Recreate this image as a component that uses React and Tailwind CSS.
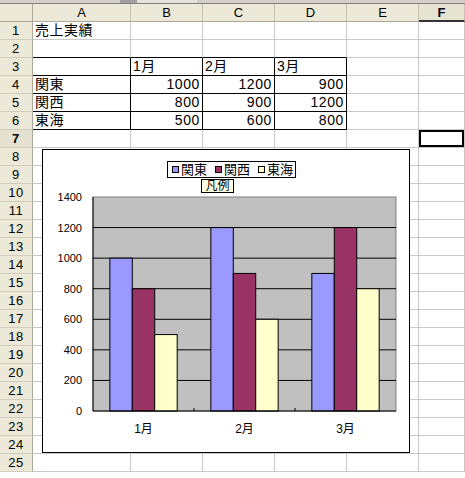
import React from 'react';

const FONT = { fontFamily: '"Liberation Sans", "Noto Sans CJK JP", sans-serif' };

const COLS = ['A', 'B', 'C', 'D', 'E', 'F'];

const DATA = {
  1: ['売上実績'],
  3: ['', '1月', '2月', '3月'],
  4: ['関東', 1000, 1200, 900],
  5: ['関西', 800, 900, 1200],
  6: ['東海', 500, 600, 800],
};

const SERIES = [
  { name: '関東', color: '#9999ff', values: [1000, 1200, 900] },
  { name: '関西', color: '#993366', values: [800, 900, 1200] },
  { name: '東海', color: '#ffffcc', values: [500, 600, 800] },
];

const Cell = ({ row, col }) => {
  const v = (DATA[row] || [])[col];
  const inTable = row >= 3 && row <= 6 && col <= 3;
  const aboveTable = row === 2 && col <= 3;
  const active = row === 7 && col === 5;
  const isNum = typeof v === 'number';

  let border = 'border-r border-b border-[#c8c8c8]';
  if (inTable) border = 'border-r border-b border-black';
  else if (aboveTable) border = 'border-r border-b border-r-[#c8c8c8] border-b-black';

  return (
    <div
      className={`h-[18px] bg-white text-[14px] leading-[17px] whitespace-nowrap overflow-visible ${border} ${
        isNum ? 'text-right pr-[2px] tracking-[0.6px]' : 'pl-[2px] tracking-[0.5px]'
      } ${active ? 'shadow-[inset_0_0_0_2px_#000]' : ''}`}
    >
      {v}
    </div>
  );
};

const Chart = () => {
  const left = 50;
  const right = 353;
  const top = 18;
  const bottom = 232;
  const catW = (right - left) / 3;
  const barW = catW / 4.5;
  const scale = (bottom - top) / 1400;
  const ticks = [0, 200, 400, 600, 800, 1000, 1200, 1400];

  return (
    <div className="absolute left-[42px] top-[149px] w-[368px] h-[304px] border border-black bg-white">
      <div className="h-[29px] pt-[11px] pl-[124px] flex items-start">
        <div className="h-[17px] border border-black bg-white flex items-center pl-[4px] pr-[2px] gap-[8px] whitespace-nowrap">
          {SERIES.map((s) => (
            <div key={s.name} className="flex items-center gap-[2px] shrink-0">
              <span className="w-[7px] h-[7px] shrink-0 border border-black" style={{ background: s.color }} />
              <span className="text-[13px] leading-[15px]">{s.name}</span>
            </div>
          ))}
        </div>
      </div>
      <div className="absolute left-[158px] top-[29px] w-[33px] h-[14px] border border-black bg-[#ffffe1] text-[12px] leading-[12px] flex items-center justify-center whitespace-nowrap">
        凡例
      </div>
      <svg width="366" height="273" className="block">
        <rect x={left} y={top} width={right - left} height={bottom - top} fill="#c0c0c0" stroke="#808080" />
        {ticks.slice(1, -1).map((t) => (
          <line key={t} x1={left} x2={right} y1={bottom - t * scale} y2={bottom - t * scale} stroke="#000" />
        ))}
        {SERIES.map((s, si) =>
          s.values.map((v, ci) => {
            const x = left + ci * catW + barW * 0.75 + si * barW;
            const h = v * scale;
            return (
              <rect key={`${si}-${ci}`} x={x} y={bottom - h} width={barW} height={h} fill={s.color} stroke="#000" />
            );
          })
        )}
        <line x1={left} x2={left} y1={top} y2={bottom} stroke="#000" />
        <line x1={left} x2={right} y1={bottom} y2={bottom} stroke="#000" />
        {[1, 2].map((i) => (
          <line key={i} x1={left + i * catW} x2={left + i * catW} y1={bottom - 3} y2={bottom} stroke="#000" />
        ))}
        {ticks.map((t) => (
          <text key={t} x={39} y={bottom - t * scale} textAnchor="end" dominantBaseline="central" fontSize="11" style={FONT}>
            {t}
          </text>
        ))}
        {['1月', '2月', '3月'].map((m, i) => (
          <text key={m} x={left + i * catW + catW / 2} y={250} textAnchor="middle" dominantBaseline="central" fontSize="12" style={FONT}>
            {m}
          </text>
        ))}
      </svg>
    </div>
  );
};

export default function App() {
  const rows = Array.from({ length: 25 }, (_, i) => i + 1);
  return (
    <div className="relative w-[465px] h-[478px] bg-white overflow-hidden text-black" style={FONT}>
      <div className="h-[4px] bg-[#d4d0c8] border-b border-[#808080] flex">
        <div className="ml-[120px] w-[17px] bg-[#a0a0a0]" />
        <div className="w-[60px] bg-[#e4e2da]" />
      </div>
      <div className="grid grid-cols-[33px_98px_72px_72px_72px_72px_1fr]">
        <div className="h-[18px] bg-[#ece9d8] border-r border-b border-[#aca899]" />
        {COLS.map((c, i) => (
          <div
            key={c}
            className={`h-[18px] text-[13px] leading-[17px] text-center border-r ${
              i === 5 ? 'bg-[#e6e3d3] border-b-2 border-b-[#333] font-semibold' : 'bg-[#ece9d8] border-b border-b-[#aca899]'
            } border-r-[#c5c2b2]`}
          >
            {c}
          </div>
        ))}
        {rows.map((r) => (
          <React.Fragment key={r}>
            <div
              className={`h-[18px] text-[13px] leading-[17px] text-center border-r border-b border-r-[#aca899] border-b-[#d0cdbd] tracking-[0.6px] ${
                r === 7 ? 'bg-[#e4e1d1] font-bold border-b-[#333]' : 'bg-[#ece9d8]'
              }`}
            >
              {r}
            </div>
            {COLS.map((c, ci) => (
              <Cell key={c} row={r} col={ci} />
            ))}
          </React.Fragment>
        ))}
      </div>
      <Chart />
    </div>
  );
}
